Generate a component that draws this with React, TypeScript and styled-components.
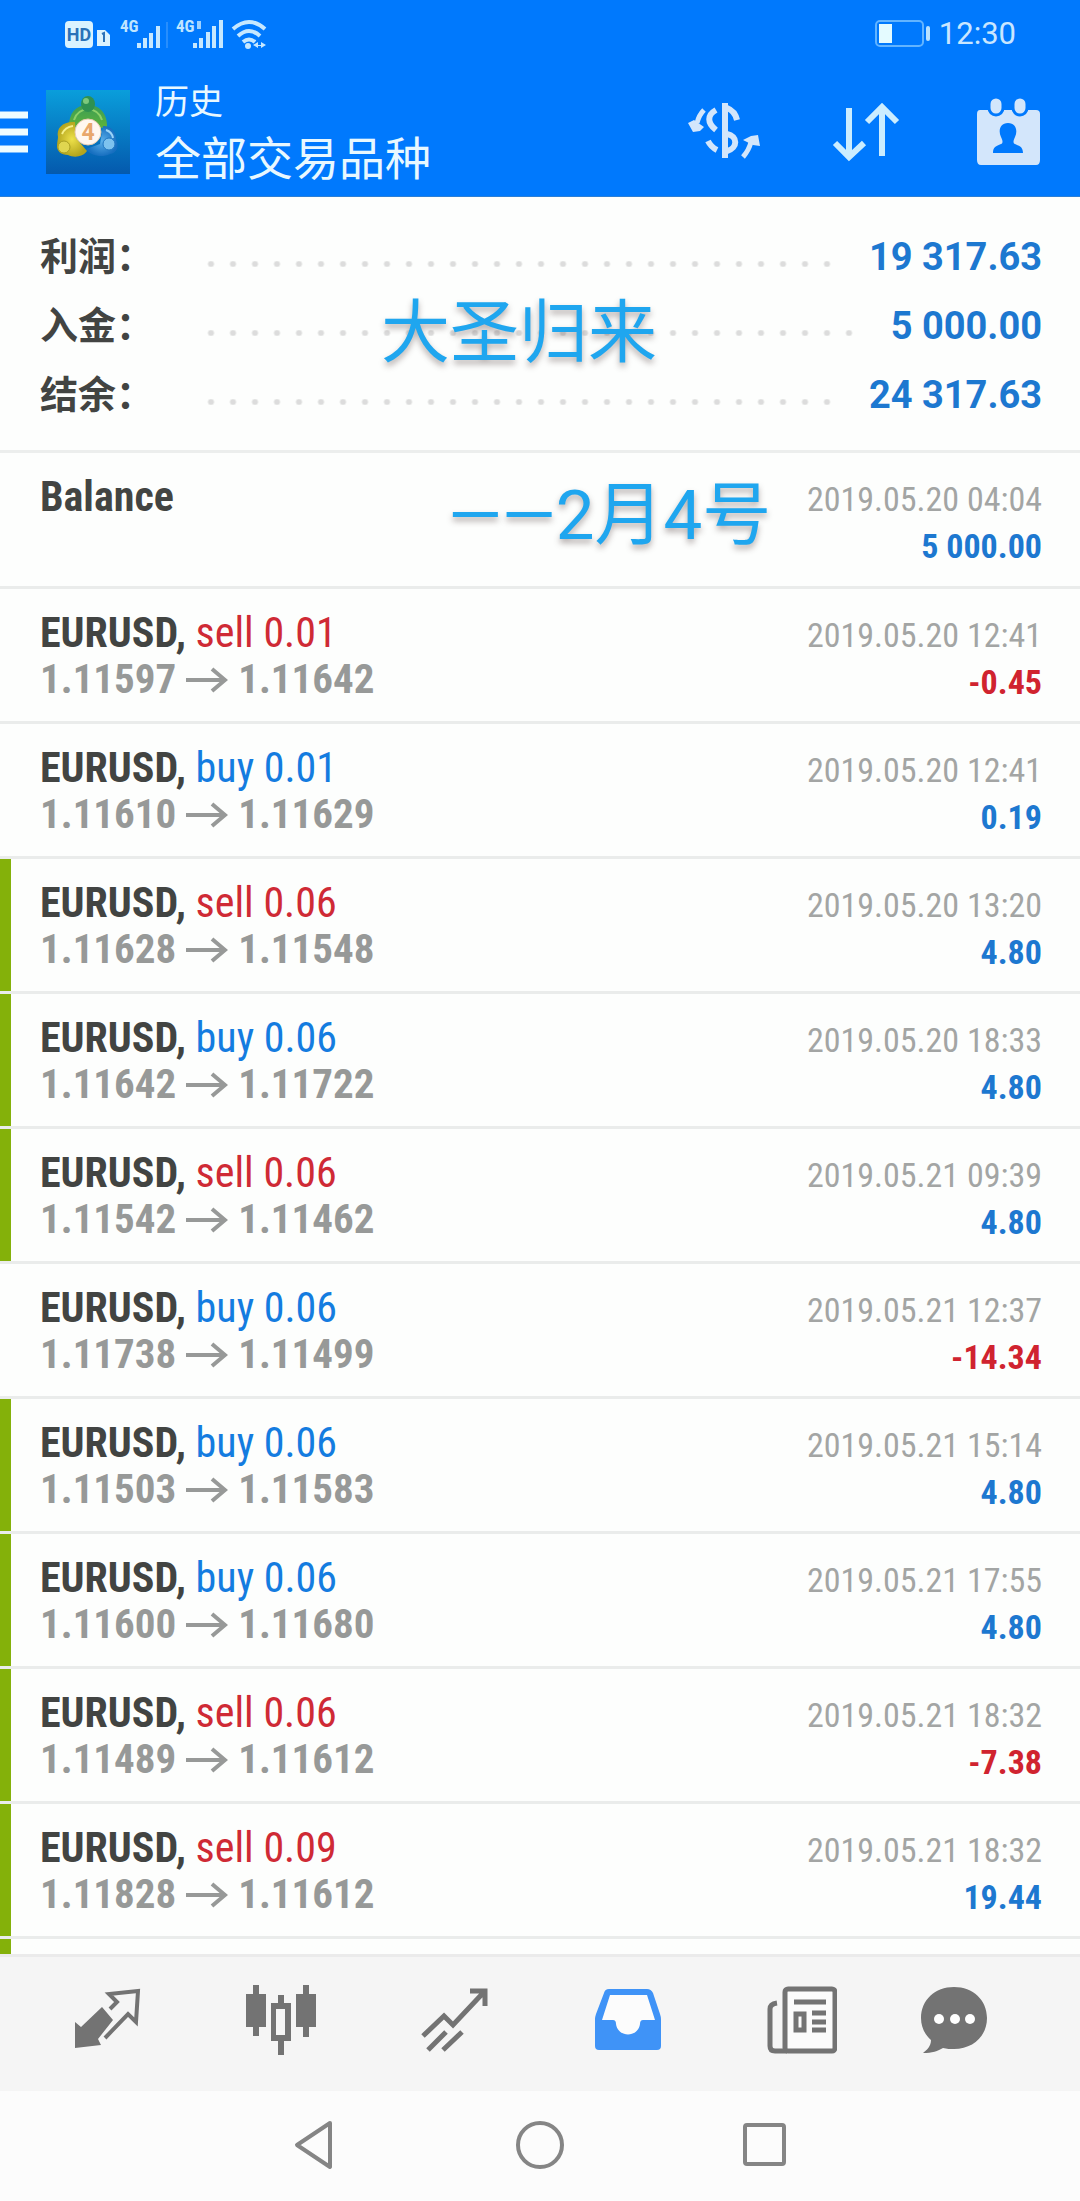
import React from "react";
import styled, { createGlobalStyle, css } from "styled-components";

const BLUE = "#0079fd";
const ICE = "#d3e6fb";

const GlobalStyle = createGlobalStyle`
  * { box-sizing: border-box; }
  body {
    margin: 0;
    background: #fdfefd;
    font-family: Roboto, "Noto Sans CJK SC", sans-serif;
  }
  button { padding: 0; border: 0; background: none; cursor: pointer; }
  ul, dl, dd, h1, p { margin: 0; padding: 0; list-style: none; }
  svg { display: block; }
`;

const Screen = styled.div`
  display: flex;
  flex-direction: column;
  min-height: 100vh;
`;

const Header = styled.header`
  background: ${BLUE};
  border-bottom: 1px solid #2b7fd6;
`;

const StatusBar = styled.div`
  display: flex;
  align-items: center;
  justify-content: space-between;
  height: 68px;
  padding: 0 64px;
`;

const StatusGroup = styled.div`
  display: flex;
  align-items: center;
  gap: 8px;
`;

const Clock = styled.time`
  color: #c9e6ff;
  font-size: 31px;
  line-height: 40px;
`;

const Toolbar = styled.div`
  display: flex;
  align-items: center;
  height: 128px;
  padding-right: 35px;
`;

const MenuButton = styled.button`
  width: 28px;
  margin-right: 18px;
`;

const Titles = styled.div`
  flex: 1;
  padding: 6px 0 0 25px;
  color: #e8f8ff;
`;

const Section = styled.p`
  font-size: 34px;
  line-height: 48px;
`;

const Title = styled.h1`
  font-size: 46px;
  font-weight: 400;
  line-height: 66px;
`;

const Actions = styled.div`
  display: flex;
  gap: 68px;
`;

const Main = styled.main`
  position: relative;
  display: flex;
  flex: 1;
  flex-direction: column;
`;

const Summary = styled.dl`
  padding: 25px 38px 21px 40px;
  border-bottom: 3px solid #eceeed;
`;

const SummaryRow = styled.div`
  display: flex;
  align-items: center;
  height: 69px;
`;

const SummaryLabel = styled.dt`
  width: 160px;
  color: #424442;
  font-size: 38px;
  font-weight: 700;
  line-height: 56px;
`;

const Leader = styled.span`
  flex: 1;
  height: 6px;
  margin: 14px 32px 0 0;
  background: radial-gradient(circle, #dcdcdc 2px, transparent 4px) 0 0 / 22px 6px repeat-x;
`;

const SummaryValue = styled.dd`
  color: #1d78d0;
  font-size: 38px;
  font-weight: 700;
  line-height: 56px;
`;

const List = styled.ul`
  flex: 1;
`;

const narrow = css`
  font-family: "Roboto Condensed", "Liberation Sans Narrow", Roboto, "Noto Sans CJK SC", sans-serif;
`;

const Row = styled.li<{ $closed?: boolean; $tall?: boolean }>`
  ${narrow}
  position: relative;
  display: flex;
  justify-content: space-between;
  height: ${(p) => (p.$tall ? 136 : 135)}px;
  padding: 20px 38px 0 40px;
  border-bottom: 3px solid #eaeceb;
  &::before {
    content: "";
    display: ${(p) => (p.$closed ? "block" : "none")};
    position: absolute;
    inset: 0 auto 0 0;
    width: 11px;
    background: #84b10a;
  }
`;

const NextRow = styled.li`
  width: 11px;
  height: 15px;
  background: #84b10a;
`;

const Deal = styled.div`
  font-size: 42px;
  line-height: 47px;
`;

const Symbol = styled.strong`
  color: #424442;
  font-weight: 700;
`;

const Side = styled.span<{ $sell: boolean }>`
  color: ${(p) => (p.$sell ? "#cf2a35" : "#147ce0")};
`;

const Prices = styled.p`
  display: flex;
  align-items: center;
  gap: 10px;
  color: #979998;
  font-size: 41px;
  font-weight: 700;
`;

const Result = styled.div`
  padding-top: 3px;
  font-size: 34px;
  line-height: 47px;
  text-align: right;
`;

const Stamp = styled.p`
  color: #a3a5a4;
`;

const Amount = styled.p<{ $loss: boolean }>`
  color: ${(p) => (p.$loss ? "#d0232f" : "#1d78d0")};
  font-weight: 700;
`;

const Note = styled.p<{ $left: number; $top: number }>`
  position: absolute;
  left: ${(p) => p.$left}px;
  top: ${(p) => p.$top}px;
  color: #1fa6ef;
  font-size: 69px;
  line-height: 80px;
  white-space: nowrap;
  text-shadow: 0 4px 6px rgba(70, 50, 50, 0.4);
`;

const Tabs = styled.nav`
  display: grid;
  grid-template-columns: repeat(5, 4fr) 3fr;
  height: 137px;
  padding: 0 61px 8px 20px;
  background: #f5f5f5;
  border-top: 3px solid #ebebeb;
`;

const Tab = styled.button`
  display: flex;
  align-items: center;
  justify-content: center;
  color: #737373;
`;

const SystemNav = styled.nav`
  display: flex;
  align-items: center;
  justify-content: center;
  gap: 165px;
  height: 110px;
  padding-bottom: 2px;
  background: #fcfcfc;
`;

const SignalIcons = () => (
  <svg width="204" height="34" viewBox="0 0 204 34" aria-hidden="true">
    <rect x="1" y="4" width="28" height="27" rx="4" fill="#d9f3ff" />
    <text x="15" y="24" textAnchor="middle" fontFamily="Roboto, sans-serif" fontSize="18" fontWeight="700" fill="#2a72b8">HD</text>
    <path d="M33 13h8l5 5v11h-13z" fill="#d9f3ff" />
    <path d="M38 17l2-1v9" stroke="#2a72b8" strokeWidth="2" fill="none" />
    <g fontFamily="Roboto Condensed, Roboto, sans-serif" fontSize="17" fontWeight="700" fill="#bfe5ff">
      <text x="56" y="15">4G</text>
      <text x="112" y="15">4G</text>
    </g>
    <g fill="#c6e8ff">
      <rect x="73" y="26" width="4" height="5" /><rect x="79" y="21" width="4" height="10" />
      <rect x="85" y="16" width="4" height="15" /><rect x="92" y="9" width="4" height="22" />
      <rect x="102" y="5" width="2" height="26" opacity=".2" />
      <rect x="133" y="4" width="4" height="8" opacity=".8" />
      <rect x="129" y="26" width="4" height="5" /><rect x="135" y="21" width="4" height="10" />
      <rect x="142" y="15" width="4" height="16" /><rect x="148" y="9" width="4" height="22" />
      <rect x="155" y="3" width="4" height="28" />
    </g>
    <g fill="none" stroke="#c6e8ff" strokeWidth="4">
      <path d="M169 12q16-14 32 0" /><path d="M174 19q11-10 22 0" /><path d="M179 25q6-5 12 0" />
    </g>
    <circle cx="184" cy="29" r="3" fill="#c6e8ff" />
    <path d="M189 28l5-3v3h3v-3l5 3-5 3v-2h-3v2z" fill="#c6e8ff" />
  </svg>
);

const BatteryIcon = () => (
  <svg width="56" height="28" viewBox="0 0 56 28" aria-hidden="true">
    <rect x="1" y="1" width="47" height="25" rx="4" fill="none" stroke="#62b4ff" strokeWidth="2" />
    <rect x="4" y="4" width="13" height="19" fill="#e4fbff" />
    <rect x="51" y="6" width="4" height="15" rx="2" fill="#b9e2ff" />
  </svg>
);

const MenuIcon = () => (
  <svg width="28" height="42" viewBox="0 0 28 42" aria-hidden="true">
    <path d="M0 4h28M0 21h28M0 38h28" stroke="#eefcff" strokeWidth="7" />
  </svg>
);

const AppLogo = () => (
  <svg width="84" height="84" viewBox="0 0 84 84" role="img" aria-label="MetaTrader">
    <defs>
      <linearGradient id="bg" x1="0" y1="0" x2="0" y2="1">
        <stop offset="0" stopColor="#0a9edb" /><stop offset="1" stopColor="#0459ad" />
      </linearGradient>
      <linearGradient id="green" x1="0" y1="0" x2="0" y2="1"><stop offset="0" stopColor="#3c9d55" /><stop offset="1" stopColor="#5fb43a" /></linearGradient>
      <radialGradient id="gold"><stop offset="0" stopColor="#eee14a" /><stop offset="1" stopColor="#b4a51d" /></radialGradient>
      <radialGradient id="sky"><stop offset="0" stopColor="#5cb0ea" /><stop offset="1" stopColor="#176fc0" /></radialGradient>
    </defs>
    <rect width="84" height="84" fill="url(#bg)" />
    <path d="M42 15c13 0 20 10 19 24l-9-2-10-8-10 8-9-1c0-12 6-21 19-21z" fill="url(#green)" />
    <path d="M28 30q3-10 14-11 11 1 14 11" fill="none" stroke="#8bd06a" strokeWidth="2" />
    <ellipse cx="42" cy="14" rx="7" ry="8" fill="#2f9150" />
    <circle cx="40" cy="11" r="3" fill="#7cc87c" />
    <path d="M12 47c-2-9 5-16 17-15l1 16 11 13c-4 6-13 7-19 4-7 0-11-4-11-9 0-4 1-7 1-9z" fill="url(#gold)" />
    <circle cx="18" cy="57" r="6" fill="#e0d650" stroke="#a99f22" strokeWidth="1" />
    <path d="M16 44q3-7 11-8" fill="none" stroke="#f6f08a" strokeWidth="2" />
    <path d="M57 36c9 0 13 6 13 14 4 7 0 13-6 14-8 4-19 2-24-5l14-5z" fill="url(#sky)" />
    <circle cx="63" cy="54" r="6" fill="#7dc2ee" stroke="#2177c2" strokeWidth="1" />
    <path d="M60 40q6 2 7 8" fill="none" stroke="#9bd4f7" strokeWidth="2" />
    <circle cx="42" cy="42" r="13" fill="#fff7f0" stroke="#e9cdb0" strokeWidth="1" />
    <text x="42" y="50" textAnchor="middle" fontFamily="Roboto, sans-serif" fontSize="23" fontWeight="700" fill="#e8a76c">4</text>
  </svg>
);

const CurrencyIcon = () => (
  <svg width="74" height="60" viewBox="0 0 74 60" fill="none" stroke={ICE} strokeWidth="6" aria-hidden="true">
    <path d="M38 1v55" />
    <path d="M29 8c-9 5-9 13 0 20M21 39q3 6 9 9" />
    <path d="M40 6q8 3 10 12M40 32c11 2 11 14 0 17" />
    <path d="M17 8q-5 5-7 13M56 55q6-7 8-15" strokeWidth="5" />
    <path d="M1 21l6-3 10 7-4 4-7 1zM56 38l8-4 7-1 2 11-7-1z" fill={ICE} stroke="none" />
  </svg>
);

const SortIcon = () => (
  <svg width="74" height="60" viewBox="0 0 74 60" fill="none" stroke="#cbedff" strokeWidth="6" aria-hidden="true">
    <path d="M20 6v50M6 41l14 14 15-14M53 54V5M38 20L53 5l15 15" />
  </svg>
);

const CalendarIcon = () => (
  <svg width="74" height="68" viewBox="0 0 74 68" aria-hidden="true">
    <path d="M9 12h56q4 0 4 4v46q0 5-4 5H10q-4 0-4-5V16q0-4 3-4z" fill={ICE} />
    <g fill={ICE} stroke={BLUE} strokeWidth="3">
      <rect x="18" y="-1" width="14" height="18" rx="7" /><rect x="42" y="-1" width="14" height="18" rx="7" />
    </g>
    <path d="M37 25c-8 0-10 8-7 14 2 4 2 6 0 7-5 2-8 3-8 9h30c0-6-3-7-8-9-2-1-2-3 0-7 3-6 1-14-7-14z" fill={BLUE} />
  </svg>
);

const PriceArrow = () => (
  <svg width="42" height="26" viewBox="0 0 42 26" fill="none" stroke="#979998" strokeWidth="4" role="img" aria-label="to">
    <path d="M0 13h39M26 2l13 11-13 11" />
  </svg>
);

const QuotesIcon = () => (
  <svg width="70" height="66" viewBox="0 0 70 66" aria-hidden="true">
    <path d="M3 35l6 5 21-20 11 13-15 19 3 6-26 3z" fill="currentColor" />
    <path d="M38 22l7-7-8-8 29-3-2 31-8-8-23 24" fill="none" stroke="currentColor" strokeWidth="4" />
  </svg>
);

const ChartIcon = () => (
  <svg width="70" height="70" viewBox="0 0 70 70" aria-hidden="true">
    <path d="M0 9h7V0h6v9h7v33h-7v9H7v-9H0zM50 9h7V0h6v9h7v33h-7v10h-6V42h-7zM25 18h7v-8h6v8h7v38h-7v14h-6V56h-7zm5 6v26h9V24z" fill="currentColor" fillRule="evenodd" />
  </svg>
);

const TradeIcon = () => (
  <svg width="68" height="66" viewBox="0 0 68 66" fill="none" stroke="currentColor" strokeWidth="5" aria-hidden="true">
    <path d="M3 49l21-20 9 9L64 5M50 4h15v15M8 63l18-18M23 63l19-18" />
  </svg>
);

const InboxIcon = () => (
  <svg width="68" height="64" viewBox="0 0 68 64" aria-hidden="true">
    <path d="M15 1h38q4 0 6 4l7 21q1 3 1 5v27q0 4-4 4H5q-4 0-4-4V31q0-2 1-5L10 5q1-4 5-4z" fill="#3f93f7" />
    <path d="M16 7L8 32h11q3 0 3 4c2 14 22 14 24 0q0-4 3-4h12L53 7z" fill="#fcfcfc" />
  </svg>
);

const NewsIcon = () => (
  <svg width="70" height="68" viewBox="0 0 70 68" fill="none" stroke="currentColor" strokeWidth="5" aria-hidden="true">
    <rect x="18" y="3" width="50" height="62" rx="3" fill="#fbfbfb" />
    <path d="M10 17q-7 1-7 6v37q0 5 5 5h12" />
    <path d="M27 16h32M45 27h14M45 36h14M45 44h14" />
    <rect x="29" y="28" width="8" height="16" />
  </svg>
);

const ChatIcon = () => (
  <svg width="68" height="68" viewBox="0 0 68 68" aria-hidden="true">
    <path d="M34 1C15 1 1 14 1 32c0 9 4 17 10 22 0 6-4 10-8 13 9 0 15-2 20-5 4 1 7 1 11 1 19 0 33-13 33-31S53 1 34 1z" fill="currentColor" />
    <g fill="#fff"><circle cx="19" cy="33" r="5" /><circle cx="35" cy="33" r="5" /><circle cx="50" cy="33" r="5" /></g>
  </svg>
);

const navShapes = [
  { name: "返回", shape: <path d="M45 8L12 30l33 22z" strokeLinejoin="round" /> },
  { name: "主屏幕", shape: <circle cx="30" cy="30" r="22" /> },
  { name: "最近任务", shape: <rect x="10" y="10" width="39" height="39" rx="2" /> },
];

const totals = [
  ["利润：", "19 317.63"],
  ["入金：", "5 000.00"],
  ["结余：", "24 317.63"],
];

type DealData = { side: "sell" | "buy"; lots: string; open: string; close: string; time: string; amount: string; marked?: boolean };

const deals: DealData[] = [
  { side: "sell", lots: "0.01", open: "1.11597", close: "1.11642", time: "2019.05.20 12:41", amount: "-0.45" },
  { side: "buy", lots: "0.01", open: "1.11610", close: "1.11629", time: "2019.05.20 12:41", amount: "0.19" },
  { side: "sell", lots: "0.06", open: "1.11628", close: "1.11548", time: "2019.05.20 13:20", amount: "4.80", marked: true },
  { side: "buy", lots: "0.06", open: "1.11642", close: "1.11722", time: "2019.05.20 18:33", amount: "4.80", marked: true },
  { side: "sell", lots: "0.06", open: "1.11542", close: "1.11462", time: "2019.05.21 09:39", amount: "4.80", marked: true },
  { side: "buy", lots: "0.06", open: "1.11738", close: "1.11499", time: "2019.05.21 12:37", amount: "-14.34" },
  { side: "buy", lots: "0.06", open: "1.11503", close: "1.11583", time: "2019.05.21 15:14", amount: "4.80", marked: true },
  { side: "buy", lots: "0.06", open: "1.11600", close: "1.11680", time: "2019.05.21 17:55", amount: "4.80", marked: true },
  { side: "sell", lots: "0.06", open: "1.11489", close: "1.11612", time: "2019.05.21 18:32", amount: "-7.38", marked: true },
  { side: "sell", lots: "0.09", open: "1.11828", close: "1.11612", time: "2019.05.21 18:32", amount: "19.44", marked: true },
];

const tabs = [
  { name: "行情", icon: <QuotesIcon /> },
  { name: "图表", icon: <ChartIcon /> },
  { name: "交易", icon: <TradeIcon /> },
  { name: "历史", icon: <InboxIcon /> },
  { name: "新闻", icon: <NewsIcon /> },
  { name: "消息", icon: <ChatIcon /> },
];

export default function App() {
  return (
    <Screen>
      <GlobalStyle />
      <Header>
        <StatusBar>
          <SignalIcons />
          <StatusGroup>
            <BatteryIcon />
            <Clock>12:30</Clock>
          </StatusGroup>
        </StatusBar>
        <Toolbar>
          <MenuButton aria-label="菜单"><MenuIcon /></MenuButton>
          <AppLogo />
          <Titles>
            <Section>历史</Section>
            <Title>全部交易品种</Title>
          </Titles>
          <Actions>
            <button aria-label="交易品种"><CurrencyIcon /></button>
            <button aria-label="排序"><SortIcon /></button>
            <button aria-label="日期"><CalendarIcon /></button>
          </Actions>
        </Toolbar>
      </Header>
      <Main>
        <Summary>
          {totals.map(([label, value]) => (
            <SummaryRow key={label}>
              <SummaryLabel>{label}</SummaryLabel>
              <Leader />
              <SummaryValue>{value}</SummaryValue>
            </SummaryRow>
          ))}
        </Summary>
        <List>
          <Row $tall>
            <Deal><Symbol>Balance</Symbol></Deal>
            <Result>
              <Stamp>2019.05.20 04:04</Stamp>
              <Amount $loss={false}>5 000.00</Amount>
            </Result>
          </Row>
          {deals.map((d) => (
            <Row key={d.open} $closed={d.marked}>
              <Deal>
                <p><Symbol>EURUSD,</Symbol> <Side $sell={d.side === "sell"}>{d.side} {d.lots}</Side></p>
                <Prices><span>{d.open}</span><PriceArrow /><span>{d.close}</span></Prices>
              </Deal>
              <Result>
                <Stamp>{d.time}</Stamp>
                <Amount $loss={d.amount.startsWith("-")}>{d.amount}</Amount>
              </Result>
            </Row>
          ))}
          <NextRow />
        </List>
        <Note $left={381} $top={97}>大圣归来</Note>
        <Note $left={448} $top={279}>——2月4号</Note>
      </Main>
      <Tabs>
        {tabs.map((t) => <Tab key={t.name} aria-label={t.name}>{t.icon}</Tab>)}
      </Tabs>
      <SystemNav>
        {navShapes.map((n) => (
          <button key={n.name} aria-label={n.name}>
            <svg width="60" height="60" viewBox="0 0 60 60" fill="none" stroke="#858585" strokeWidth="4" aria-hidden="true">{n.shape}</svg>
          </button>
        ))}
      </SystemNav>
    </Screen>
  );
}
